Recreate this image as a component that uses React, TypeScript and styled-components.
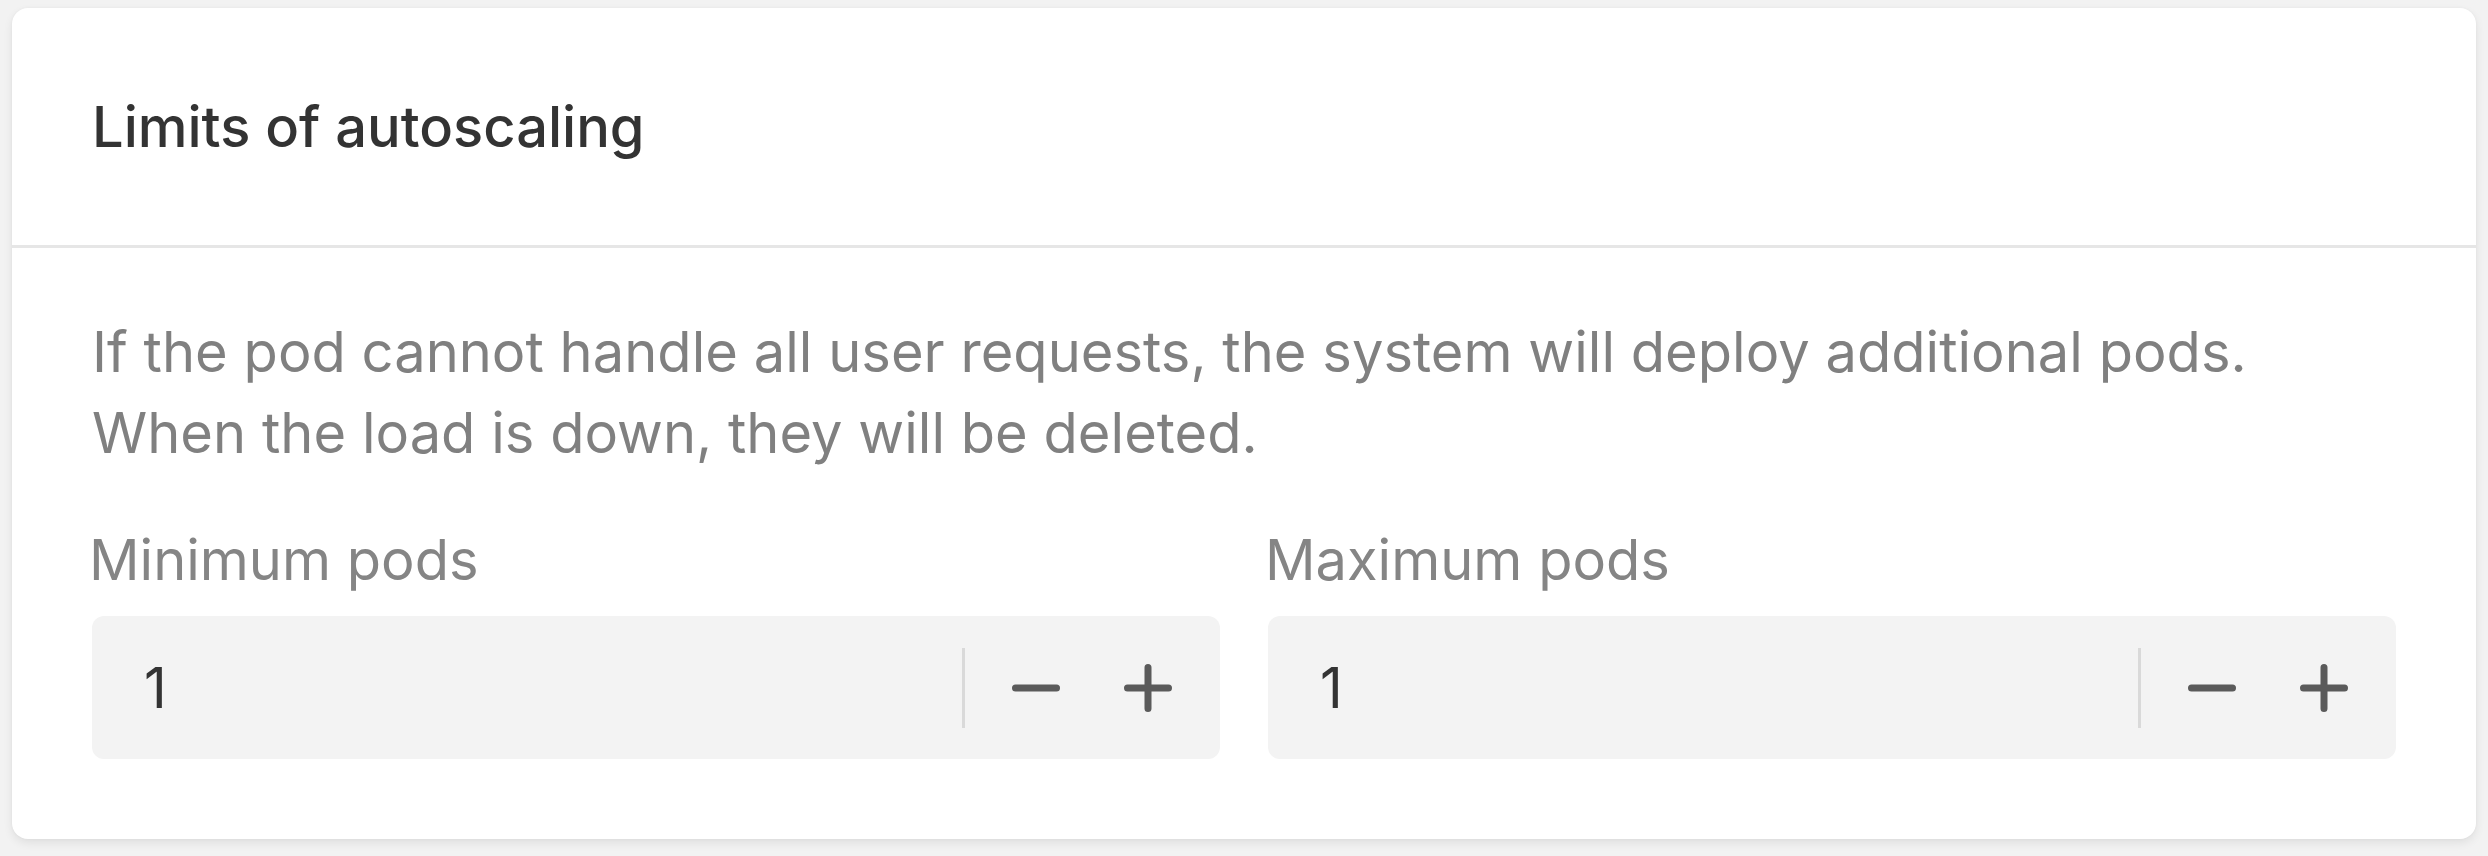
import React from "react";
import styled, { createGlobalStyle } from "styled-components";

const GlobalStyle = createGlobalStyle`
  html, body {
    margin: 0;
    padding: 0;
    background: #f2f2f2;
  }
  body {
    font-family: Inter, "Noto Sans", "Liberation Sans", sans-serif;
  }
  * { box-sizing: border-box; }
`;

const Page = styled.div`
  padding: 8px 12px 16px 12px;
`;

const Card = styled.section`
  background: #ffffff;
  border-radius: 16px;
  box-shadow: 0 4px 10px rgba(0, 0, 0, 0.08), 0 0 3px rgba(0, 0, 0, 0.04);
  overflow: hidden;
`;

const Header = styled.header`
  height: 240px;
  display: flex;
  align-items: center;
  padding: 0 80px;
  border-bottom: 3px solid #e6e6e6;
`;

const Title = styled.h2`
  margin: 0;
  font-size: 56px;
  font-weight: 500;
  color: #333333;
  line-height: 68px;
`;

const Body = styled.div`
  padding: 64px 80px 80px;
`;

const Description = styled.p`
  margin: 0;
  font-size: 56px;
  line-height: 81px;
  color: #808080;
  font-weight: 400;
  letter-spacing: 0.03px;
`;

const Fields = styled.div`
  display: grid;
  grid-template-columns: 1fr 1fr;
  column-gap: 48px;
  margin-top: 52px;
`;

const Field = styled.div`
  display: flex;
  flex-direction: column;
`;

const Label = styled.label`
  font-size: 56px;
  line-height: 68px;
  color: #858585;
  margin-bottom: 22px;
  margin-left: -3px;
`;

const Stepper = styled.div`
  height: 143px;
  border-radius: 12px;
  background: #f3f3f3;
  display: flex;
  align-items: center;
  padding-left: 52px;
  padding-right: 16px;
`;

const Value = styled.span`
  flex: 1;
  font-size: 56px;
  color: #333333;
  line-height: 68px;
`;

const Separator = styled.span`
  width: 3px;
  height: 80px;
  background: #d9d9d9;
  margin-right: 15px;
`;

const StepButton = styled.button`
  width: 112px;
  height: 112px;
  border: none;
  background: transparent;
  padding: 0;
  display: flex;
  align-items: center;
  justify-content: center;
  cursor: pointer;
  color: #5a5a5a;
`;

const MinusIcon = () => (
  <svg width="56" height="56" viewBox="0 0 56 56" fill="none">
    <path d="M7.5 28H48.5" stroke="currentColor" strokeWidth="7" strokeLinecap="round" />
  </svg>
);

const PlusIcon = () => (
  <svg width="56" height="56" viewBox="0 0 56 56" fill="none">
    <path d="M7.5 28H48.5M28 7.5V48.5" stroke="currentColor" strokeWidth="7" strokeLinecap="round" />
  </svg>
);

const NumberField: React.FC<{ label: string; value: number }> = ({ label, value }) => (
  <Field>
    <Label>{label}</Label>
    <Stepper>
      <Value>{value}</Value>
      <Separator />
      <StepButton aria-label="decrease">
        <MinusIcon />
      </StepButton>
      <StepButton aria-label="increase">
        <PlusIcon />
      </StepButton>
    </Stepper>
  </Field>
);

export default function App() {
  return (
    <>
      <GlobalStyle />
      <Page>
        <Card>
          <Header>
            <Title>Limits of autoscaling</Title>
          </Header>
          <Body>
            <Description>
              If the pod cannot handle all user requests, the system will deploy additional pods.
              <br />
              When the load is down, they will be deleted.
            </Description>
            <Fields>
              <NumberField label="Minimum pods" value={1} />
              <NumberField label="Maximum pods" value={1} />
            </Fields>
          </Body>
        </Card>
      </Page>
    </>
  );
}
